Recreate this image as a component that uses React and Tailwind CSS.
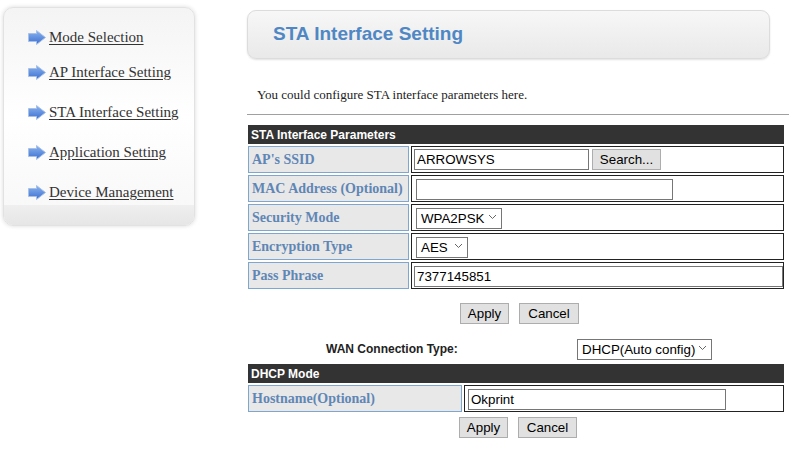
import React from 'react';

const serif = { fontFamily: '"Liberation Serif", "Times New Roman", serif' };

const Arrow = () => (
  <svg width="18" height="15" viewBox="0 0 18 15" className="shrink-0">
    <defs>
      <linearGradient id="ag" x1="0" y1="0" x2="0" y2="1">
        <stop offset="0" stopColor="#8ab4f0" />
        <stop offset="1" stopColor="#3c6fd0" />
      </linearGradient>
    </defs>
    <polygon points="0.5,3.5 8.5,3.5 8.5,0.5 17.5,7.5 8.5,14.5 8.5,11.5 0.5,11.5" fill="url(#ag)" stroke="#a9c0e6" strokeWidth="1" />
  </svg>
);

const navItems = [
  ['Mode Selection', 'mt-[21px]'],
  ['AP Interface Setting', 'mt-[19px]'],
  ['STA Interface Setting', 'mt-[24px]'],
  ['Application Setting', 'mt-[24px]'],
  ['Device Management', 'mt-[24px]'],
];

const btn =
  'h-[21px] px-[6px] bg-[#e1e1e1] border border-[#adadad] text-[13.333px] leading-none text-black font-["Liberation_Sans",Arial,sans-serif]';

const inputCls =
  'h-[21px] border border-[#767676] px-[2px] text-[13.333px] text-black bg-white outline-none font-["Liberation_Sans",Arial,sans-serif]';

const Select = ({ value, w }) => (
  <div className={`relative inline-block align-middle ${w}`}>
    <select
      className="appearance-none w-full h-[21px] border border-[#767676] bg-white text-[13.333px] text-black pl-[4px] pr-[14px] font-['Liberation_Sans',Arial,sans-serif]"
      defaultValue={value}
    >
      <option>{value}</option>
    </select>
    <svg width="9" height="6" viewBox="0 0 9 6" className="absolute right-[5px] top-[8px] pointer-events-none">
      <polyline points="1,1 4.5,4.5 8,1" fill="none" stroke="#666" strokeWidth="1" />
    </svg>
  </div>
);

const Label = ({ children }) => (
  <td
    className="border border-[#7fa6cf] bg-[#e8e8e8] px-[3px] h-[27px] text-[14px] font-bold text-[#5f86b5] whitespace-nowrap overflow-hidden"
    style={serif}
  >
    {children}
  </td>
);

const Value = ({ children }) => (
  <td className="border border-[#222] px-[2px] h-[27px]">{children}</td>
);

const Head = ({ children }) => (
  <tr>
    <td colSpan={2} className="bg-[#333] text-white text-[12px] font-bold h-[19px] px-[3px] leading-none">
      {children}
    </td>
  </tr>
);

export default function App() {
  return (
    <div className="w-[804px] h-[456px] bg-white flex items-start overflow-hidden font-['Liberation_Sans',Arial,sans-serif]">
      <aside className="ml-[3px] mt-[7px] w-[192px] h-[219px] rounded-[10px] border border-[#e2e2e2] shadow-[0_0_4px_rgba(0,0,0,0.15)] bg-gradient-to-b from-[#f4f4f4] via-white to-[#f7f7f7] overflow-hidden flex flex-col">
        <nav className="flex flex-col pl-[24px] flex-1">
          {navItems.map(([t, m]) => (
            <a key={t} href="#" className={`flex items-center gap-[3px] ${m} text-[15px] leading-[16px] text-[#333] underline underline-offset-2 whitespace-nowrap`} style={serif}>
              <Arrow />
              <span>{t}</span>
            </a>
          ))}
        </nav>
        <div className="h-[20px] bg-gradient-to-b from-[#efefef] to-[#e6e6e6]" />
      </aside>

      <main className="ml-[52px] w-[543px] flex flex-col">
        <div className="mt-[10px] w-[523px] h-[49px] rounded-[9px] border border-[#dcdcdc] bg-gradient-to-b from-[#f7f7f7] to-[#e9e9e9] shadow-[0_1px_2px_rgba(0,0,0,0.12)] flex items-center pl-[25px]">
          <h1 className="text-[19px] font-bold text-[#4f87c4]">STA Interface Setting</h1>
        </div>

        <p className="mt-[28px] ml-[10px] text-[13px] leading-[16px] text-[#222]" style={serif}>
          You could configure STA interface parameters here.
        </p>
        <hr className="mt-[11px] border-t border-[#a0a0a0] w-[542px]" />

        <table className="mt-[8px] w-[540px] table-fixed border-separate border-spacing-[2px] -ml-[1px]">
          <colgroup>
            <col className="w-[161px]" />
            <col />
          </colgroup>
          <tbody>
            <Head>STA Interface Parameters</Head>
            <tr>
              <Label>AP's SSID</Label>
              <Value>
                <div className="flex items-center gap-[3px]">
                  <input className={`${inputCls} w-[175px]`} defaultValue="ARROWSYS" />
                  <button className={`${btn} w-[69px]`}>Search...</button>
                </div>
              </Value>
            </tr>
            <tr>
              <Label>MAC Address (Optional)</Label>
              <Value>
                <input className={`${inputCls} w-[257px] ml-[2px]`} defaultValue="" />
              </Value>
            </tr>
            <tr>
              <Label>Security Mode</Label>
              <Value>
                <div className="ml-[2px]"><Select value="WPA2PSK" w="w-[86px]" /></div>
              </Value>
            </tr>
            <tr>
              <Label>Encryption Type</Label>
              <Value>
                <div className="ml-[2px]"><Select value="AES" w="w-[52px]" /></div>
              </Value>
            </tr>
            <tr>
              <Label>Pass Phrase</Label>
              <Value>
                <input className={`${inputCls} w-[369px]`} defaultValue="7377145851" />
              </Value>
            </tr>
          </tbody>
        </table>

        <div className="mt-[12px] flex gap-[10px] ml-[213px]">
          <button className={`${btn} w-[49px]`}>Apply</button>
          <button className={`${btn} w-[60px]`}>Cancel</button>
        </div>

        <div className="mt-[15px] flex items-center h-[19px]">
          <span className="ml-[79px] w-[251px] text-[12px] font-bold text-[#222]">WAN Connection Type:</span>
          <Select value="DHCP(Auto config)" w="w-[135px]" />
        </div>

        <table className="mt-[4px] w-[540px] table-fixed border-separate border-spacing-[2px] -ml-[1px]">
          <colgroup>
            <col className="w-[214px]" />
            <col />
          </colgroup>
          <tbody>
            <Head>DHCP Mode</Head>
            <tr>
              <Label>Hostname(Optional)</Label>
              <td className="border border-[#222] px-[3px] h-[27px]">
                <input className={`${inputCls} w-[258px]`} defaultValue="Okprint" />
              </td>
            </tr>
          </tbody>
        </table>

        <div className="mt-[3px] flex gap-[10px] ml-[212px]">
          <button className={`${btn} w-[49px]`}>Apply</button>
          <button className={`${btn} w-[59px]`}>Cancel</button>
        </div>
      </main>
    </div>
  );
}
